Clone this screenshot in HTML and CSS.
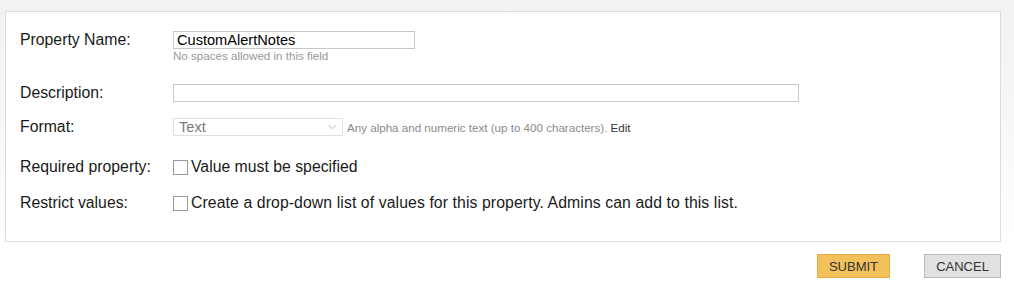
FILE: index.html
```html
<!DOCTYPE html>
<html>
<head>
<meta charset="utf-8">
<link rel="stylesheet" href="styles.css">
</head>
<body>
<div class="page">
  <div class="panel">
    <div class="row row-name">
      <div class="label">Property Name:</div>
      <div class="control">
        <input class="text-input short" type="text" value="CustomAlertNotes">
        <div class="hint">No spaces allowed in this field</div>
      </div>
    </div>
    <div class="row row-desc">
      <div class="label">Description:</div>
      <div class="control">
        <input class="text-input long" type="text" value="">
      </div>
    </div>
    <div class="row row-format">
      <div class="label">Format:</div>
      <div class="control inline">
        <div class="select">
          <span class="select-value">Text</span>
          <svg class="chev" width="9" height="6" viewBox="0 0 9 6"><path d="M0.5 0.8 L4.5 4.8 L8.5 0.8" fill="none" stroke="#b8b8b8" stroke-width="1"/></svg>
        </div>
        <span class="format-note">Any alpha and numeric text (up to 400 characters). <span class="edit">Edit</span></span>
      </div>
    </div>
    <div class="row row-req">
      <div class="label">Required property:</div>
      <label class="control check">
        <span class="box"></span>
        <span>Value must be specified</span>
      </label>
    </div>
    <div class="row row-restrict">
      <div class="label">Restrict values:</div>
      <label class="control check">
        <span class="box"></span>
        <span class="long-text">Create a drop-down list of values for this property. Admins can add to this list.</span>
      </label>
    </div>
  </div>
  <div class="actions">
    <button class="btn submit">SUBMIT</button>
    <button class="btn cancel">CANCEL</button>
  </div>
</div>
</body>
</html>
```
FILE: styles.css
```css
html, body {
  margin: 0;
  padding: 0;
}
body {
  width: 1014px;
  height: 288px;
  background: linear-gradient(to bottom, #f2f2f2 0px, #f7f7f7 120px, #ffffff 240px);
  font-family: "Liberation Sans", Arial, sans-serif;
  color: #1a1a1a;
  overflow: hidden;
}
.page {
  padding: 11px 13px 0 5px;
}
.panel {
  background: #fff;
  border: 1px solid #dcdcdc;
  padding: 19px 0 28px 14px;
}
.row {
  display: grid;
  grid-template-columns: 153px 1fr;
  align-items: start;
}
.label {
  font-size: 15.8px;
  line-height: 18px;
}
.row-req .label, .row-restrict .label {
  line-height: 20px;
}
.control {
  display: flex;
  flex-direction: column;
}
.text-input {
  box-sizing: border-box;
  height: 18px;
  border: 1px solid #c8c8c8;
  padding: 0 3px;
  margin: 0;
  font-family: "Liberation Sans", Arial, sans-serif;
  font-size: 14.6px;
  color: #000;
  background: #fff;
  outline: none;
}
.short { width: 242px; }
.long { width: 626px; }
.hint {
  font-size: 11.6px;
  color: #999;
  line-height: 14px;
}
.row-desc { margin-top: 21px; }
.row-format { margin-top: 16px; }
.row-req { margin-top: 21px; }
.row-restrict { margin-top: 16px; }
.inline {
  flex-direction: row;
  align-items: center;
}
.select {
  box-sizing: border-box;
  width: 170px;
  height: 18px;
  border: 1px solid #e0e0e0;
  display: flex;
  align-items: center;
  justify-content: space-between;
  padding: 0 5px 0 5px;
}
.select-value {
  font-size: 14.6px;
  color: #7a7a7a;
}
.chev { display: block; }
.format-note {
  font-size: 11.6px;
  color: #8a8a8a;
  margin-left: 4px;
}
.edit { color: #333; }
.check {
  flex-direction: row;
  align-items: center;
  font-size: 15.8px;
  line-height: 20px;
  color: #1a1a1a;
}
.long-text {
  letter-spacing: 0.09px;
}
.box {
  box-sizing: border-box;
  width: 15px;
  height: 15px;
  border: 1px solid #999;
  background: #fff;
  margin-right: 3px;
}
.actions {
  display: flex;
  justify-content: flex-end;
  gap: 34px;
  margin-top: 12px;
}
.btn {
  box-sizing: border-box;
  height: 24px;
  font-family: "Liberation Sans", Arial, sans-serif;
  font-size: 13px;
  color: #333;
  padding: 0;
  cursor: pointer;
}
.submit {
  width: 73px;
  background: #f2c15c;
  border: 1px solid #e8a93e;
}
.cancel {
  width: 77px;
  background: #e1e1e1;
  border: 1px solid #b8b8b8;
}
```
